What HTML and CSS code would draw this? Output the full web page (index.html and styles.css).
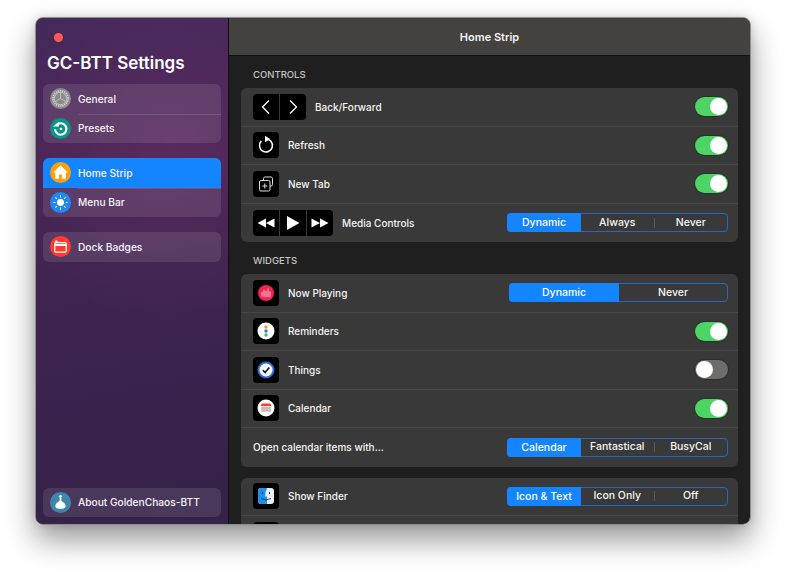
FILE: index.html
```html
<!DOCTYPE html>
<html lang="en">
<head>
    <meta charset="UTF-8">
    <title>GC-BTT Settings</title>
    <link rel="stylesheet" href="styles.css">
</head>
<body>
<div class="window">
    <aside class="sidebar">
        <span class="close-dot"></span>
        <h1 class="app-title">GC-BTT Settings</h1>

        <div class="nav-group">
            <div class="nav-row">
                <span class="nav-icon bg-gray">
                    <svg viewBox="0 0 22 22"><circle cx="11" cy="11" r="8" fill="none" stroke="#d6d6d6" stroke-width="1.600" stroke-dasharray="1.300 1"/><circle cx="11" cy="11" r="6.500" fill="#8b8b8b" stroke="#d6d6d6" stroke-width=".8"/><path d="M11 11V4.500M11 11l5.600 3.200M11 11l-5.600 3.200" stroke="#d6d6d6" stroke-width=".7"/></svg>
                </span>
                <span class="nav-label">General</span>
            </div>
            <div class="nav-row">
                <span class="nav-icon bg-teal">
                    <svg viewBox="0 0 22 22"><path d="M6.600 7.600a6 6 0 1 1-1.400 4.400" fill="none" stroke="#fff" stroke-width="2.200"/><path d="M3.200 8.800h6.200V3.800z" fill="#fff"/><circle cx="11.500" cy="11.500" r="1.400" fill="#fff"/></svg>
                </span>
                <span class="nav-label">Presets</span>
            </div>
        </div>

        <div class="nav-group">
            <div class="nav-row active">
                <span class="nav-icon bg-orange">
                    <svg viewBox="0 0 22 22"><path d="M11 3.500 3.500 11h2v6.500h4V13h3v4.500h4V11h2z" fill="#fff"/></svg>
                </span>
                <span class="nav-label">Home Strip</span>
            </div>
            <div class="nav-row">
                <span class="nav-icon bg-blue">
                    <svg viewBox="0 0 22 22"><circle cx="11" cy="11" r="3.600" fill="#fff"/><path d="M11 3.500v2.200M11 16.300v2.200M3.500 11h2.200M16.300 11h2.200M5.700 5.700l1.500 1.500M14.800 14.800l1.500 1.500M5.700 16.300l1.500-1.500M14.800 7.200l1.500-1.500" stroke="#fff" stroke-width="1.100"/></svg>
                </span>
                <span class="nav-label">Menu Bar</span>
            </div>
        </div>

        <div class="nav-group">
            <div class="nav-row">
                <span class="nav-icon bg-red">
                    <svg viewBox="0 0 22 22"><rect x="5" y="7" width="12" height="10" rx="1.200" fill="none" stroke="#fff" stroke-width="1.300"/><path d="M5 9.500h12" stroke="#fff" stroke-width="2"/><circle cx="6.600" cy="6.200" r="1.500" fill="#fff"/></svg>
                </span>
                <span class="nav-label">Dock Badges</span>
            </div>
        </div>

        <div class="nav-group nav-bottom">
            <div class="nav-row">
                <span class="nav-icon bg-steel">
                    <svg viewBox="0 0 22 22"><circle cx="11" cy="4.600" r="1.500" fill="#fff"/><path d="M10.200 6h1.600v2.600c0 1.200 4.600 2.800 4.600 6 0 1.800-1.600 3-5.400 3s-5.400-1.200-5.400-3c0-3.200 4.600-4.800 4.600-6z" fill="#fff"/></svg>
                </span>
                <span class="nav-label">About GoldenChaos-BTT</span>
            </div>
        </div>
    </aside>

    <main class="main">
        <header class="titlebar">Home Strip</header>

        <div class="content">
            <h2 class="section-label">CONTROLS</h2>
            <section class="group">
                <div class="row">
                    <div class="key-strip">
                        <span class="key"><svg viewBox="0 0 26 26"><path d="M16 6.500 9.500 13 16 19.500" fill="none" stroke="#fff" stroke-width="1.300"/></svg></span>
                        <span class="key"><svg viewBox="0 0 26 26"><path d="M10 6.500 16.500 13 10 19.500" fill="none" stroke="#fff" stroke-width="1.300"/></svg></span>
                    </div>
                    <span class="row-label">Back/Forward</span>
                    <span class="toggle on"></span>
                </div>
                <div class="row">
                    <div class="key-strip">
                        <span class="key"><svg viewBox="0 0 26 26"><path d="M8.400 8.900A6.500 6.500 0 1 0 13 7" fill="none" stroke="#fff" stroke-width="1.500"/><path d="M12 3.800v6.400l5-3.200z" fill="#fff"/></svg></span>
                    </div>
                    <span class="row-label">Refresh</span>
                    <span class="toggle on"></span>
                </div>
                <div class="row">
                    <div class="key-strip">
                        <span class="key"><svg viewBox="0 0 26 26"><path d="M10.500 9V7.500q0-1.500 1.500-1.500h6q1.500 0 1.500 1.500v6q0 1.500-1.500 1.500h-1" fill="none" stroke="#ddd"/><rect x="6.500" y="9.500" width="10.500" height="10.500" rx="1.500" fill="none" stroke="#ddd"/><path d="M11.750 12.500v5M9.250 15h5" stroke="#ddd"/></svg></span>
                    </div>
                    <span class="row-label">New Tab</span>
                    <span class="toggle on"></span>
                </div>
                <div class="row">
                    <div class="key-strip">
                        <span class="key"><svg viewBox="0 0 26 26"><path d="M13 8.500v9L4.500 13zM21.500 8.500v9L13 13z" fill="#fff"/></svg></span>
                        <span class="key"><svg viewBox="0 0 26 26"><path d="M7 6v14l12.500-7z" fill="#fff"/></svg></span>
                        <span class="key"><svg viewBox="0 0 26 26"><path d="M4.500 8.500v9L13 13zM13 8.500v9l8.500-4.500z" fill="#fff"/></svg></span>
                    </div>
                    <span class="row-label">Media Controls</span>
                    <div class="segments">
                        <span class="segment selected">Dynamic</span>
                        <span class="segment">Always</span>
                        <span class="seg-divider"></span>
                        <span class="segment">Never</span>
                    </div>
                </div>
            </section>

            <h2 class="section-label">WIDGETS</h2>
            <section class="group">
                <div class="row">
                    <div class="key-strip">
                        <span class="key"><svg viewBox="0 0 26 26"><circle cx="13" cy="13" r="8" fill="#f5234f"/><path d="M9 12v5M11 9.500v7.500M13 11v6M15 8.500v8.500M17 11.500v5.500" stroke="#ffc4d0" stroke-width="1"/></svg></span>
                    </div>
                    <span class="row-label">Now Playing</span>
                    <div class="segments two">
                        <span class="segment selected">Dynamic</span>
                        <span class="segment">Never</span>
                    </div>
                </div>
                <div class="row">
                    <div class="key-strip">
                        <span class="key"><svg viewBox="0 0 26 26"><circle cx="13" cy="13" r="8.500" fill="#fff"/><circle cx="13" cy="9" r="1.700" fill="#f90"/><circle cx="13" cy="13" r="1.700" fill="#1e7cf0"/><circle cx="13" cy="17" r="1.700" fill="#2fc95a"/></svg></span>
                    </div>
                    <span class="row-label">Reminders</span>
                    <span class="toggle on"></span>
                </div>
                <div class="row">
                    <div class="key-strip">
                        <span class="key"><svg viewBox="0 0 26 26"><circle cx="13" cy="13" r="7.500" fill="#fff" stroke="#2a70d8" stroke-width="2"/><path d="M9.800 13.200l2.300 2.300 4.200-5" fill="none" stroke="#1c1c1e" stroke-width="1.700"/></svg></span>
                    </div>
                    <span class="row-label">Things</span>
                    <span class="toggle"></span>
                </div>
                <div class="row">
                    <div class="key-strip">
                        <span class="key"><svg viewBox="0 0 26 26"><circle cx="13" cy="13" r="8.500" fill="#fff"/><path d="M8 10q0-1.500 1.500-1.500h7q1.500 0 1.500 1.500v1H8z" fill="#f0443c"/><rect x="8" y="11.500" width="10" height="5.500" fill="#d6c9c9"/><path d="M9 13h8M9 15h8" stroke="#a99" stroke-width=".6"/></svg></span>
                    </div>
                    <span class="row-label">Calendar</span>
                    <span class="toggle on"></span>
                </div>
                <div class="row">
                    <span class="row-label">Open calendar items with...</span>
                    <div class="segments">
                        <span class="segment selected">Calendar</span>
                        <span class="segment">Fantastical</span>
                        <span class="seg-divider"></span>
                        <span class="segment">BusyCal</span>
                    </div>
                </div>
            </section>

            <section class="group last">
                <div class="row">
                    <div class="key-strip">
                        <span class="key"><svg viewBox="0 0 26 26"><rect x="5" y="5" width="16" height="16" rx="3" fill="#e6eef6"/><path d="M8 5h6q-2 4-1.800 8.500H14V21H8q-3 0-3-3V8q0-3 3-3z" fill="#1c8ff0"/><path d="M9.500 9v2M16.500 9v2" stroke="#123" stroke-width="1"/><path d="M8 15.500q5 3 10 0" fill="none" stroke="#123" stroke-width=".8"/></svg></span>
                    </div>
                    <span class="row-label">Show Finder</span>
                    <div class="segments">
                        <span class="segment selected">Icon &amp; Text</span>
                        <span class="segment">Icon Only</span>
                        <span class="seg-divider"></span>
                        <span class="segment">Off</span>
                    </div>
                </div>
                <div class="row">
                    <div class="key-strip">
                        <span class="key"></span>
                    </div>
                </div>
            </section>
        </div>
    </main>
</div>
</body>
</html>
```

FILE: styles.css
```css
* {
    box-sizing: border-box;
}

body {
    margin: 0;
    padding: 17px 0 0 35px;
    height: 577px;
    overflow: hidden;
    background-color: #fff;
    font-family: Inter, "Liberation Sans", sans-serif;
    color: #f2f2f2;
}

.window {
    display: flex;
    width: 716px;
    height: 508px;
    border-radius: 8px;
    overflow: hidden;
    border: 1px solid #8f8d90;
    box-shadow: 0 15px 30px rgba(0, 0, 0, 0.4), 0 0 8px rgba(0, 0, 0, 0.15);
}

/* sidebar */
.sidebar {
    display: flex;
    flex-direction: column;
    width: 193px;
    flex-shrink: 0;
    padding: 0 7px 7px 7px;
    background-color: #3a2449;
    background-image:
        radial-gradient(circle at 70% 24%, rgba(110, 50, 105, 0.45), rgba(110, 50, 105, 0) 45%),
        linear-gradient(170deg, #42285a 0%, #462554 30%, #3d244e 55%, #342248 100%);
    border-right: 1px solid #111;
}

.close-dot {
    width: 9px;
    height: 9px;
    margin: 15px 0 0 11px;
    border-radius: 50%;
    background-color: #fb5b52;
}

.app-title {
    margin: 9px 0 9px 4px;
    font-size: 17px;
    line-height: 24px;
    font-weight: 600;
    color: #fff;
}

.nav-group {
    margin-bottom: 15px;
    border-radius: 6px;
    overflow: hidden;
    background-color: rgba(255, 255, 255, 0.1);
}

.nav-bottom {
    margin-top: auto;
    margin-bottom: 0;
}

.nav-row {
    display: flex;
    align-items: center;
    height: 29.5px;
    padding-left: 7px;
    position: relative;
}

.nav-row + .nav-row::before {
    content: "";
    position: absolute;
    top: 0;
    left: 35px;
    right: 0;
    height: 1px;
    background-color: rgba(255, 255, 255, 0.12);
}

.nav-row.active {
    background-color: #1484ff;
}

.nav-icon {
    width: 21px;
    height: 21px;
    border-radius: 50%;
    flex-shrink: 0;
    margin-right: 7px;
}

.nav-icon svg {
    display: block;
    width: 21px;
    height: 21px;
}

.nav-label {
    font-size: 10.2px;
    font-weight: 450;
    color: #f7f4f9;
}

.bg-gray { background-color: #8b8b8b; }
.bg-teal { background-color: #0d9488; }
.bg-orange { background-color: #ff9f0a; }
.bg-blue { background-color: #1e88f5; }
.bg-red { background-color: #ff3b30; }
.bg-steel { background-color: #3f86ad; }

/* main panel */
.main {
    flex: 1;
    min-width: 0;
    display: flex;
    flex-direction: column;
    background-color: #1f1f1f;
}

.titlebar {
    height: 38px;
    flex-shrink: 0;
    display: flex;
    align-items: center;
    justify-content: center;
    background-color: #43423f;
    border-bottom: 1px solid #111;
    font-size: 11px;
    font-weight: 600;
    color: #f2f2f2;
}

.content {
    padding: 0 12px;
    overflow: hidden;
}

.section-label {
    margin: 0;
    padding: 13px 0 7px 12px;
    font-size: 9.5px;
    line-height: 12px;
    font-weight: 450;
    color: #c4c4c4;
}

.group {
    border-radius: 6px;
    background-color: #393939;
}

.group.last {
    margin-top: 11px;
}

.row {
    display: flex;
    align-items: center;
    height: 38.5px;
    padding: 0 10px 0 12px;
    border-bottom: 1px solid #474747;
}

.row:last-child {
    border-bottom: 0;
}

.key-strip {
    display: flex;
    gap: 1px;
    border-radius: 4px;
    overflow: hidden;
    margin-right: 9px;
}

.key {
    width: 26px;
    height: 26px;
    background-color: #000;
}

.key svg {
    display: block;
    width: 26px;
    height: 26px;
}

.row-label {
    font-size: 10px;
    font-weight: 450;
    color: #f4f4f4;
}

.toggle {
    margin-left: auto;
    width: 33px;
    height: 19px;
    border-radius: 10px;
    background-color: #6f6c6c;
    display: flex;
    align-items: center;
    padding: 1px;
    box-shadow: 0 0 0 1px rgba(0, 0, 0, 0.2);
}

.toggle::after {
    content: "";
    width: 17px;
    height: 17px;
    border-radius: 50%;
    background-color: #fff;
}

.toggle.on {
    background-color: #4cd464;
    justify-content: flex-end;
}

.segments {
    margin-left: auto;
    width: 221px;
    height: 19px;
    display: flex;
    align-items: center;
    border: 1px solid #2468c4;
    border-radius: 4px;
    font-size: 10.5px;
    font-weight: 450;
    color: #f6f6f6;
}

.segment {
    flex: 1;
    text-align: center;
    line-height: 20px;
}

.segment.selected {
    flex: none;
    width: 74px;
    height: 19px;
    margin-left: -1px;
    border-radius: 4px 1px 1px 4px;
    background-color: #1484ff;
    color: #fff;
}

.seg-divider {
    width: 1px;
    height: 10px;
    background-color: #5a5a5a;
}

.segments.two {
    width: 219px;
}

.segments.two .segment.selected {
    width: 110px;
}
```
